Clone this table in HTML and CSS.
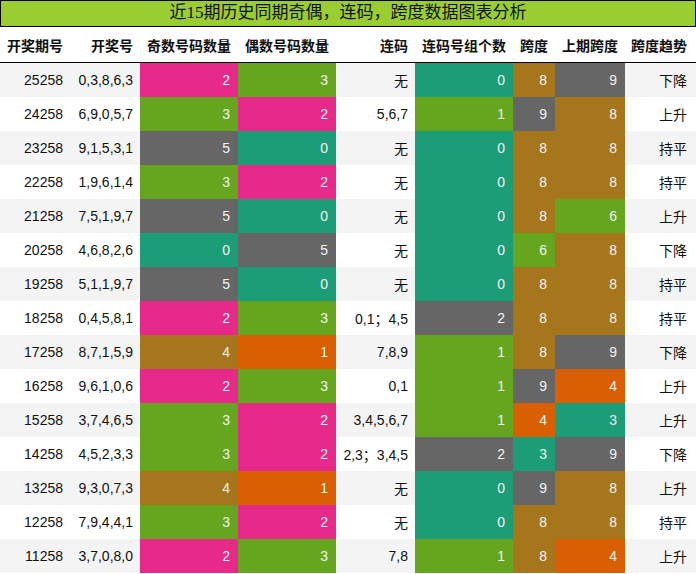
FILE: index.html
```html
<!DOCTYPE html>
<html lang="zh">
<head>
<meta charset="utf-8">
<title>近15期历史同期奇偶，连码，跨度数据图表分析</title>
<link rel="stylesheet" href="styles.css">
</head>
<body>
<div class="title">近15期历史同期奇偶，连码，跨度数据图表分析</div>
<table class="data">
<colgroup>
<col class="w70"><col class="w70"><col class="w98"><col class="w98"><col class="w79"><col class="w98"><col class="w42"><col class="w70"><col class="w71">
</colgroup>
<thead>
<tr><th>开奖期号</th><th>开奖号</th><th>奇数号码数量</th><th>偶数号码数量</th><th>连码</th><th>连码号组个数</th><th>跨度</th><th>上期跨度</th><th class="last">跨度趋势</th></tr>
</thead>
<tbody>
<tr><td>25258</td><td>0,3,8,6,3</td><td class="c pink">2</td><td class="c green">3</td><td>无</td><td class="c teal">0</td><td class="c brown">8</td><td class="c gray">9</td><td class="last">下降</td></tr>
<tr><td>24258</td><td>6,9,0,5,7</td><td class="c green">3</td><td class="c pink">2</td><td>5,6,7</td><td class="c green">1</td><td class="c gray">9</td><td class="c brown">8</td><td class="last">上升</td></tr>
<tr><td>23258</td><td>9,1,5,3,1</td><td class="c gray">5</td><td class="c teal">0</td><td>无</td><td class="c teal">0</td><td class="c brown">8</td><td class="c brown">8</td><td class="last">持平</td></tr>
<tr><td>22258</td><td>1,9,6,1,4</td><td class="c green">3</td><td class="c pink">2</td><td>无</td><td class="c teal">0</td><td class="c brown">8</td><td class="c brown">8</td><td class="last">持平</td></tr>
<tr><td>21258</td><td>7,5,1,9,7</td><td class="c gray">5</td><td class="c teal">0</td><td>无</td><td class="c teal">0</td><td class="c brown">8</td><td class="c green">6</td><td class="last">上升</td></tr>
<tr><td>20258</td><td>4,6,8,2,6</td><td class="c teal">0</td><td class="c gray">5</td><td>无</td><td class="c teal">0</td><td class="c green">6</td><td class="c brown">8</td><td class="last">下降</td></tr>
<tr><td>19258</td><td>5,1,1,9,7</td><td class="c gray">5</td><td class="c teal">0</td><td>无</td><td class="c teal">0</td><td class="c brown">8</td><td class="c brown">8</td><td class="last">持平</td></tr>
<tr><td>18258</td><td>0,4,5,8,1</td><td class="c pink">2</td><td class="c green">3</td><td>0,1；4,5</td><td class="c gray">2</td><td class="c brown">8</td><td class="c brown">8</td><td class="last">持平</td></tr>
<tr><td>17258</td><td>8,7,1,5,9</td><td class="c brown">4</td><td class="c orange">1</td><td>7,8,9</td><td class="c green">1</td><td class="c brown">8</td><td class="c gray">9</td><td class="last">下降</td></tr>
<tr><td>16258</td><td>9,6,1,0,6</td><td class="c pink">2</td><td class="c green">3</td><td>0,1</td><td class="c green">1</td><td class="c gray">9</td><td class="c orange">4</td><td class="last">上升</td></tr>
<tr><td>15258</td><td>3,7,4,6,5</td><td class="c green">3</td><td class="c pink">2</td><td>3,4,5,6,7</td><td class="c green">1</td><td class="c orange">4</td><td class="c teal">3</td><td class="last">上升</td></tr>
<tr><td>14258</td><td>4,5,2,3,3</td><td class="c green">3</td><td class="c pink">2</td><td>2,3；3,4,5</td><td class="c gray">2</td><td class="c teal">3</td><td class="c gray">9</td><td class="last">下降</td></tr>
<tr><td>13258</td><td>9,3,0,7,3</td><td class="c brown">4</td><td class="c orange">1</td><td>无</td><td class="c teal">0</td><td class="c gray">9</td><td class="c brown">8</td><td class="last">上升</td></tr>
<tr><td>12258</td><td>7,9,4,4,1</td><td class="c green">3</td><td class="c pink">2</td><td>无</td><td class="c teal">0</td><td class="c brown">8</td><td class="c brown">8</td><td class="last">持平</td></tr>
<tr><td>11258</td><td>3,7,0,8,0</td><td class="c pink">2</td><td class="c green">3</td><td>7,8</td><td class="c green">1</td><td class="c brown">8</td><td class="c orange">4</td><td class="last">上升</td></tr>
</tbody>
</table>
</body>
</html>
```
FILE: styles.css
```css
html, body {
  margin: 0;
  padding: 0;
  background: #ffffff;
}
body {
  width: 696px;
  font-family: "Liberation Sans", "Noto Sans CJK SC", sans-serif;
  font-size: 14px;
  color: #111;
}
.title {
  box-sizing: border-box;
  height: 27px;
  border: 1px solid #000;
  background: #9acd32;
  text-align: center;
  font-family: "Liberation Serif", "Noto Sans CJK SC", serif;
  font-size: 17px;
  line-height: 24px;
  color: #111;
}
.data {
  width: 696px;
  border-collapse: collapse;
  border-spacing: 0;
  table-layout: fixed;
}
.w70 { width: 70px; }
.w98 { width: 98px; }
.w79 { width: 79px; }
.w42 { width: 42px; }
.w71 { width: 71px; }
.data th {
  height: 35px;
  padding: 0 7px 0 0;
  text-align: right;
  font-weight: bold;
  font-size: 14px;
  border-bottom: 1px solid #000;
  white-space: nowrap;
  background: #fff;
  color: #111;
}
.data td {
  height: 34px;
  padding: 0 7px 0 0;
  text-align: right;
  white-space: nowrap;
  color: #111;
}
.data th.last, .data td.last {
  padding-right: 9px;
}
.data tbody tr:nth-child(odd) {
  background: #f4f4f4;
}
.data tbody tr:nth-child(even) {
  background: #ffffff;
}
.data td.c {
  color: #f2f2f2;
  padding-right: 8px;
}
.pink { background: #e7298a; }
.green { background: #66a61e; }
.teal { background: #1b9e77; }
.gray { background: #666666; }
.brown { background: #a6761d; }
.orange { background: #d95f02; }
```
